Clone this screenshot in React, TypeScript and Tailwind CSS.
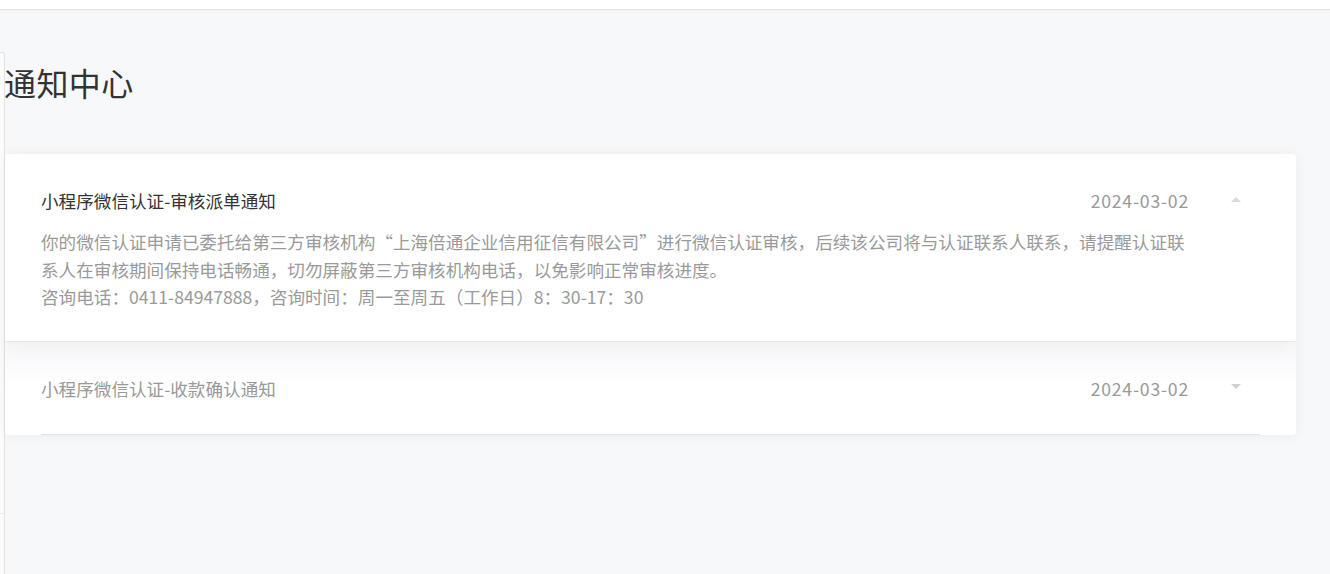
const font = "font-['Noto_Sans_CJK_SC','Noto_Sans',sans-serif]";

type Notice = {
  title: string;
  date: string;
  open: boolean;
  body?: string[];
};

const notices: Notice[] = [
  {
    title: "小程序微信认证-审核派单通知",
    date: "2024-03-02",
    open: true,
    body: [
      "你的微信认证申请已委托给第三方审核机构“上海倍通企业信用征信有限公司”进行微信认证审核，后续该公司将与认证联系人联系，请提醒认证联系人在审核期间保持电话畅通，切勿屏蔽第三方审核机构电话，以免影响正常审核进度。",
      "咨询电话：0411-84947888，咨询时间：周一至周五（工作日）8：30-17：30",
    ],
  },
  {
    title: "小程序微信认证-收款确认通知",
    date: "2024-03-02",
    open: false,
  },
];

function Arrow({ up }: { up: boolean }) {
  return up ? (
    <span className="block h-0 w-0 border-x-[5px] border-b-[5px] border-x-transparent border-b-[#dadada]" />
  ) : (
    <span className="block h-0 w-0 border-x-[5px] border-t-[5px] border-x-transparent border-t-[#d0d0d0]" />
  );
}

function NoticeItem({ n, last }: { n: Notice; last: boolean }) {
  return (
    <div
      className={
        n.open
          ? "relative z-10 border-b border-[#e6e7ea] bg-white px-9 pt-[33px] pb-[30px] shadow-[0_10px_22px_-8px_rgba(0,0,0,0.05)]"
          : "bg-gradient-to-b from-[#f6f7f9] via-white to-white px-9 pt-[33px]"
      }
    >
      <div className="flex items-center">
        <div className={`flex-1 leading-[28px] ${n.open ? "text-[#333]" : "text-[#999]"}`}>{n.title}</div>
        <div className="leading-[28px] tracking-[0.8px] text-[#999]">{n.date}</div>
        <div className="mr-[19px] ml-[42px] -mt-1">
          <Arrow up={n.open} />
        </div>
      </div>
      {n.body && (
        <div className="mt-[13px] w-[1152px] leading-[27.5px] text-[#9a9a9a]">
          {n.body.map((line, i) => (
            <p key={i}>{line}</p>
          ))}
        </div>
      )}
      {last && <div className="h-[32px] border-b border-[#e3e4e7]" />}
    </div>
  );
}

export default function App() {
  return (
    <div className={`flex min-h-[574px] flex-col bg-[#f7f8fa] ${font}`}>
      <div className="h-[10px] border-b border-[#e3e3e3] bg-white shadow-[0_1px_3px_rgba(0,0,0,0.04)]" />
      <div className="flex flex-1">
        <div className="mt-[42px] w-[5px] shrink-0 rounded-tr-[3px] border-r border-t border-[#e2e2e2] bg-[#fcfcfc]">
          <div className="mt-[460px] border-b border-[#ececec]" />
        </div>
        <main className="flex-1 pr-[34px]">
          <h1 className="mt-[48px] ml-[-1px] text-[32px] leading-[48px] tracking-[0.4px] text-[#333]">通知中心</h1>
          <div className="mt-[48px] overflow-hidden rounded-[4px] bg-white text-[17.6px] shadow-[0_0_14px_rgba(0,0,0,0.06)]">
            {notices.map((n, i) => (
              <NoticeItem key={i} n={n} last={i === notices.length - 1} />
            ))}
          </div>
        </main>
      </div>
    </div>
  );
}
